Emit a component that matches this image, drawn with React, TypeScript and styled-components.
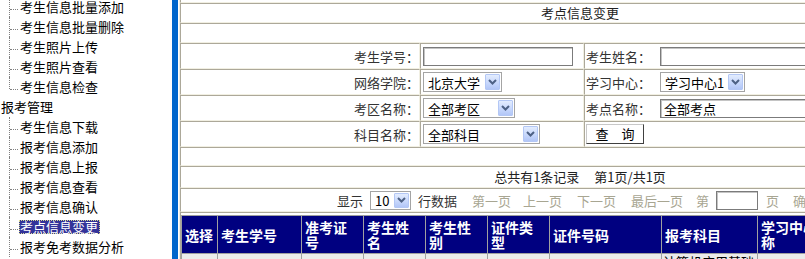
import React from 'react'
import styled, { createGlobalStyle, css } from 'styled-components'

const GlobalStyle = createGlobalStyle`
  html, body {
    margin: 0;
    padding: 0;
    background: #fff;
    overflow: hidden;
  }
  body {
    font-family: "Noto Sans CJK SC", "Liberation Sans", sans-serif;
    font-size: 13px;
    color: #000;
  }
`

const Page = styled.div`
  display: flex;
  width: 980px;
  height: 259px;
  overflow: hidden;
`

/* ---------- left tree menu ---------- */

const Sidebar = styled.div`
  width: 172px;
  flex-shrink: 0;
`

const MenuList = styled.div`
  margin-top: -3px;
`

const MenuRow = styled.div<{ $child?: boolean; $last?: boolean }>`
  position: relative;
  height: 20px;
  padding-left: ${(p) => (p.$child ? '19px' : '0')};
  white-space: nowrap;

  ${(p) =>
    p.$child &&
    css`
      &::before {
        content: '';
        position: absolute;
        left: 9px;
        top: 0;
        height: ${p.$last ? '12px' : '20px'};
        border-left: 1px dotted #808080;
      }
      &::after {
        content: '';
        position: absolute;
        left: 10px;
        top: 12px;
        width: 8px;
        border-top: 1px dotted #808080;
      }
    `}
`

const MenuLabel = styled.span<{ $active?: boolean }>`
  display: inline-block;
  margin-top: 3px;
  line-height: 12px;
  border: 1px dotted transparent;
  padding-right: 1px;

  ${(p) =>
    p.$active &&
    css`
      background: #333399;
      color: #fff;
      border-color: #d8d890;
    `}
`

const BlueBar = styled.div`
  width: 6px;
  flex-shrink: 0;
  background: #0066cc;
  margin-right: 1px;
`

/* ---------- right panel ---------- */

const Main = styled.div`
  width: 800px;
  flex-shrink: 0;
  border-left: 1px solid #f1efe2;
`

const TopEdge = styled.div`
  box-sizing: border-box;
  height: 3px;
  border-left: 1px solid #aca899;
  border-bottom: 1px solid #f1efe2;
`

const Band = styled.div<{ $h: number }>`
  box-sizing: border-box;
  height: ${(p) => p.$h}px;
  border: 1px solid;
  border-color: #aca899 #f1efe2 #f1efe2 #aca899;
  text-align: center;
  color: #222;
`

const Title = styled(Band)`
  line-height: 18px;
`

const CountBand = styled(Band)`
  line-height: 20px;

  span + span {
    margin-left: 15px;
  }
`

const PagerBand = styled(Band)`
  display: flex;
  align-items: center;
  justify-content: center;
  padding-right: 4px;
  color: #333;
`

const FormRow = styled.div`
  display: grid;
  grid-template-columns: 240px 164px 1fr;
  height: 26px;
`

const FormCell = styled.div<{ $align?: 'left' | 'right' }>`
  box-sizing: border-box;
  display: flex;
  align-items: center;
  justify-content: ${(p) => (p.$align === 'right' ? 'flex-end' : 'flex-start')};
  padding-left: ${(p) => (p.$align === 'right' ? '0' : '2px')};
  border: 1px solid;
  border-color: #aca899 #f1efe2 #f1efe2 #aca899;
  color: #333;
  white-space: nowrap;

  & + & + & {
    padding-left: 1px;
  }
`

const InlineLabel = styled.span`
  display: inline-block;
  width: 74px;
`

const TextBox = styled.input<{ $w: number }>`
  box-sizing: border-box;
  width: ${(p) => p.$w}px;
  height: 19px;
  margin: 0;
  padding: 0 3px;
  border: 1px solid #7b7b7b;
  box-shadow: inset 1px 1px 0 #c4c4c4;
  font-family: inherit;
  font-size: 13px;
  color: #000;
  background: #fff;
  outline: none;
`

const SelectBox = styled.div<{ $w: number; $h?: number }>`
  box-sizing: border-box;
  display: inline-flex;
  align-items: stretch;
  width: ${(p) => p.$w}px;
  height: ${(p) => p.$h ?? 20}px;
  padding: 1px;
  border: 1px solid #a4a4a4;
  background: #fff;
  color: #000;
`

const SelectValue = styled.span`
  flex: 1;
  display: flex;
  align-items: center;
  padding-left: 3px;
  white-space: nowrap;
`

const DropButton = styled.span`
  box-sizing: border-box;
  width: 15px;
  display: flex;
  align-items: center;
  justify-content: center;
  border: 1px solid #b3c7f5;
  border-radius: 1px;
  background: linear-gradient(#e3ecfe, #c8d8fc 55%, #b2c6f7);
`

const QueryButton = styled.button`
  box-sizing: border-box;
  width: 58px;
  height: 20px;
  margin: 0;
  padding: 0;
  border: 1px solid;
  border-color: #c8c8c8 #404040 #404040 #c8c8c8;
  background: #fff;
  font-family: inherit;
  font-size: 13px;
  line-height: 16px;
  color: #000;
`

const PagerText = styled.span<{ $gap?: number; $muted?: boolean }>`
  margin-left: ${(p) => p.$gap ?? 0}px;
  color: ${(p) => (p.$muted ? '#a8a692' : '#333')};
  white-space: nowrap;
`

const PagerControl = styled.span<{ $gap: number }>`
  display: inline-flex;
  margin-left: ${(p) => p.$gap}px;
`

/* ---------- result table ---------- */

const DataWrap = styled.div`
  border-top: 1px solid #aca899;
  border-left: 1px solid #aca899;
  padding-top: 2px;
`

const DataTable = styled.table`
  table-layout: fixed;
  width: 830px;
  border-collapse: separate;
  border-spacing: 1px;
  background: #a0a0a0;
`

const HeadCell = styled.th<{ $w: number }>`
  box-sizing: border-box;
  width: ${(p) => p.$w}px;
  padding: 4px 3px 3px;
  background: #000080;
  color: #fff;
  font-size: 14px;
  font-weight: bold;
  line-height: 15px;
  text-align: left;
  vertical-align: middle;
`

const BodyCell = styled.td<{ $top?: boolean }>`
  padding: ${(p) => (p.$top ? '0 1px 2px' : '2px 1px')};
  background: #ebebeb;
  line-height: 20px;
  vertical-align: ${(p) => (p.$top ? 'top' : 'middle')};
  white-space: nowrap;
`

const SubjectLine = styled.div`
  line-height: 16px;
  margin-bottom: 4px;
`

function Chevron() {
  return (
    <svg width="9" height="6" viewBox="0 0 9 6">
      <polyline points="1,1 4.5,4.5 8,1" fill="none" stroke="#4d6185" strokeWidth="2" />
    </svg>
  )
}

function Select({ value, width, height }: { value: string; width: number; height?: number }) {
  return (
    <SelectBox $w={width} $h={height}>
      <SelectValue>{value}</SelectValue>
      <DropButton>
        <Chevron />
      </DropButton>
    </SelectBox>
  )
}

const groupOne = ['考生信息批量添加', '考生信息批量删除', '考生照片上传', '考生照片查看', '考生信息检查']
const groupTwo = ['考生信息下载', '报考信息添加', '报考信息上报', '报考信息查看', '报考信息确认', '考点信息变更', '报考免考数据分析']

const columns = [
  { name: '选择', w: 35 },
  { name: '考生学号', w: 83 },
  { name: '准考证号', w: 61 },
  { name: '考生姓名', w: 61 },
  { name: '考生性别', w: 61 },
  { name: '证件类型', w: 61 },
  { name: '证件号码', w: 111 },
  { name: '报考科目', w: 95 },
  { name: '学习中心名称', w: 80 },
  { name: '考点名称', w: 90 },
  { name: '操作', w: 80 },
]

const subjects = ['计算机应用基础', '大学英语（一）', '高等数学（一）']

export default function App() {
  return (
    <>
      <GlobalStyle />
      <Page>
        <Sidebar>
          <MenuList>
            {groupOne.map((item, i) => (
              <MenuRow key={item} $child $last={i === groupOne.length - 1}>
                <MenuLabel>{item}</MenuLabel>
              </MenuRow>
            ))}
            <MenuRow>
              <MenuLabel>报考管理</MenuLabel>
            </MenuRow>
            {groupTwo.map((item) => (
              <MenuRow key={item} $child>
                <MenuLabel $active={item === '考点信息变更'}>{item}</MenuLabel>
              </MenuRow>
            ))}
          </MenuList>
        </Sidebar>
        <BlueBar />
        <Main>
          <TopEdge />
          <Title $h={20}>考点信息变更</Title>
          <Band $h={20} />

          <FormRow>
            <FormCell $align="right">考生学号：</FormCell>
            <FormCell>
              <TextBox $w={150} />
            </FormCell>
            <FormCell>
              <InlineLabel>考生姓名：</InlineLabel>
              <TextBox $w={150} />
            </FormCell>
          </FormRow>
          <FormRow>
            <FormCell $align="right">网络学院：</FormCell>
            <FormCell>
              <Select value="北京大学" width={79} />
            </FormCell>
            <FormCell>
              <InlineLabel>学习中心：</InlineLabel>
              <Select value="学习中心1" width={85} />
            </FormCell>
          </FormRow>
          <FormRow>
            <FormCell $align="right">考区名称：</FormCell>
            <FormCell>
              <Select value="全部考区" width={92} />
            </FormCell>
            <FormCell>
              <InlineLabel>考点名称：</InlineLabel>
              <TextBox $w={150} defaultValue="全部考点" />
            </FormCell>
          </FormRow>
          <FormRow>
            <FormCell $align="right">科目名称：</FormCell>
            <FormCell>
              <Select value="全部科目" width={117} />
            </FormCell>
            <FormCell>
              <QueryButton>查　询</QueryButton>
            </FormCell>
          </FormRow>

          <Band $h={19} />
          <CountBand $h={22}>
            <span>总共有1条记录</span>
            <span>第1页/共1页</span>
          </CountBand>
          <PagerBand $h={24}>
            <PagerText>显示</PagerText>
            <PagerControl $gap={7}>
              <Select value="10" width={41} height={19} />
            </PagerControl>
            <PagerText $gap={7}>行数据</PagerText>
            <PagerText $gap={15} $muted>第一页</PagerText>
            <PagerText $gap={12} $muted>上一页</PagerText>
            <PagerText $gap={15} $muted>下一页</PagerText>
            <PagerText $gap={15} $muted>最后一页</PagerText>
            <PagerText $gap={13} $muted>第</PagerText>
            <PagerControl $gap={7}>
              <TextBox $w={42} />
            </PagerControl>
            <PagerText $gap={8} $muted>页</PagerText>
            <PagerText $gap={14} $muted>确定</PagerText>
          </PagerBand>

          <DataWrap>
            <DataTable>
              <thead>
                <tr>
                  {columns.map((c) => (
                    <HeadCell key={c.name} $w={c.w}>
                      {c.name}
                    </HeadCell>
                  ))}
                </tr>
              </thead>
              <tbody>
                <tr>
                  <BodyCell>
                    <input type="checkbox" />
                  </BodyCell>
                  <BodyCell>108102301001</BodyCell>
                  <BodyCell>0101001</BodyCell>
                  <BodyCell>张明</BodyCell>
                  <BodyCell>男</BodyCell>
                  <BodyCell>身份证</BodyCell>
                  <BodyCell>110105198803120011</BodyCell>
                  <BodyCell $top>
                    {subjects.map((s) => (
                      <SubjectLine key={s}>{s}</SubjectLine>
                    ))}
                  </BodyCell>
                  <BodyCell>学习中心1</BodyCell>
                  <BodyCell>全部考点</BodyCell>
                  <BodyCell>变更</BodyCell>
                </tr>
              </tbody>
            </DataTable>
          </DataWrap>
        </Main>
      </Page>
    </>
  )
}
